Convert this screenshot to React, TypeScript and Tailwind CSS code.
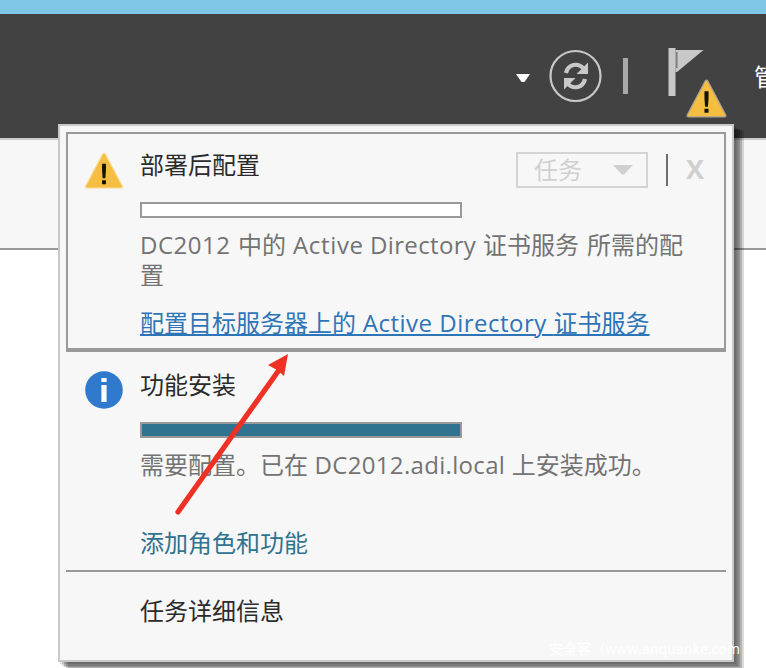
import type { ReactNode } from "react";

function Word({ className, children }: { className: string; children: ReactNode }) {
  return <span className={`inline-block whitespace-nowrap ${className}`}>{children}</span>;
}

function WarningIcon({ className, edge }: { className: string; edge: string }) {
  return (
    <svg className={className} viewBox="0 0 40 38">
      <path d="M18.6 2.2 Q20 0 21.4 2.2 L38.8 35 Q39.4 37 37.4 37 H2.6 Q.6 37 1.2 35 Z" fill="#f6be40" stroke={edge} strokeWidth="1.2" />
      <path d="M18 12 H22 V19 L21.4 27 H18.6 L18 19 Z M18 29 H22 V33 H18 Z" fill="#161200" />
    </svg>
  );
}

function InfoIcon() {
  return (
    <svg className="h-10 w-10" viewBox="0 0 40 40">
      <circle cx="20" cy="20" r="18.8" fill="#2f7acd" />
      <path d="M17.4 8 H22.6 V12 H17.4 Z M17.4 15 H22.6 V32 H17.4 Z" fill="#fff" />
    </svg>
  );
}

function Header() {
  return (
    <header className="h-[126px] shrink-0 overflow-hidden border-b-2 border-[#cccccc] bg-[#424242]">
      <div className="flex h-[110px] w-[800px] items-start pl-[516px]">
        <svg className="mt-[60px] h-2 w-[14px] shrink-0" viewBox="0 0 14 8">
          <path d="M0 0 H14 L8.5 8 H5.5 Z" fill="#fff" />
        </svg>
        <svg className="ml-[19px] mt-[35px] h-[54px] w-[54px] shrink-0" viewBox="0 0 54 54" fill="none" stroke="#c8c8c8">
          <circle cx="26.5" cy="27" r="25" strokeWidth="2.2" />
          <path d="M17 24 C19 15 29 13 35 20" strokeWidth="4.2" />
          <path d="M36 30 C34 39 24 41 18 34" strokeWidth="4.2" />
          <path d="M39 13.5 V25 H27.5 Z M15 40.5 V29 H26.5 Z" fill="#c8c8c8" stroke="none" />
        </svg>
        <div className="ml-5 mt-11 h-9 w-[5px] shrink-0 bg-[#a9a9a9]" />
        <div className="relative ml-10 mt-[34px] h-12 w-9 shrink-0">
          <svg className="h-12 w-9" viewBox="0 0 36 48">
            <path d="M.5 0 H7.5 V48 H.5 Z" fill="#c8c8c8" />
            <path d="M7.5 2 H35.5 L9 24 H7.5 Z" fill="#c8c8c8" />
            <path d="M8.8 4 V20" stroke="#777777" strokeWidth="1.4" />
          </svg>
          <WarningIcon className="absolute left-[18px] top-[31px] h-[39px] w-[41px]" edge="#a8a49a" />
        </div>
        <span className="ml-[50px] mt-[45px] shrink-0 text-[24px] leading-9 text-white">管</span>
      </div>
    </header>
  );
}

function DeploymentTask() {
  return (
    <section className="flex h-[220px] border-2 border-b-4 border-[#999999] pl-[16px]">
      <WarningIcon className="mt-[18px] h-[37px] w-10 shrink-0" edge="#f9dc93" />
      <div className="ml-4 flex-1">
        <div className="flex h-[68px]">
          <h2 className="mt-4 w-[376px] leading-[30px] text-[#2b2b2b]">部署后配置</h2>
          <button className="mt-[18px] flex h-9 w-[132px] items-center border-2 border-[#d4d4d4] pl-4 text-[#d0d0d0]">
            <span className="leading-[30px]">任务</span>
            <svg className="ml-[31px] h-[10px] w-5" viewBox="0 0 20 10">
              <path d="M0 0 H20 L11 9.5 H9 Z" fill="#d0d0d0" />
            </svg>
          </button>
          <div className="ml-[18px] mt-5 h-8 w-[2px] bg-[#6e6e6e]" />
          <span className="ml-[18px] mt-[20px] font-[Open_Sans] text-[27px] leading-[30px] font-bold text-[#cfcfcf]">X</span>
        </div>
        <div className="h-4 w-[322px] border-2 border-[#999999] bg-white" />
        <p className="mt-[12px] leading-[30px] text-[#737373]">
          <span className="flex">
            <Word className="w-[98px] tracking-[0.5px]">DC2012</Word>
            <Word className="w-[55px]">中的</Word>
            <Word className="w-[77px] tracking-[0.65px]">Active</Word>
            <Word className="w-[113px] tracking-[0.35px]">Directory</Word>
            <Word className="w-[104px]">证书服务</Word>
            <Word className="w-[96px]">所需的配</Word>
          </span>
          置
        </p>
        <a className="mt-[18px] block h-[30px] w-[510px] whitespace-nowrap leading-[30px] text-[#2e75b8] underline decoration-2 underline-offset-2" href="#configure">
          配置目标服务器上的<span className="tracking-[0.5px]"> Active Directory </span>证书服务
        </a>
      </div>
    </section>
  );
}

function InstallTask() {
  return (
    <section className="flex h-[220px] border-b-2 border-[#999999] pl-[18px]">
      <div className="mt-[18px] shrink-0"><InfoIcon /></div>
      <div className="ml-4">
        <h2 className="mt-[18px] leading-[30px] text-[#2b2b2b]">功能安装</h2>
        <div className="mt-[22px] h-4 w-[322px] border-2 border-[#999999] bg-[#2f7391]" />
        <p className="mt-[12px] whitespace-nowrap leading-[30px] text-[#737373]">
          需要配置。已在<span className="tracking-[0.32px]"> DC2012.adi.local </span>上安装成功。
        </p>
        <a className="mt-[48px] block leading-[30px] text-[#2f7391]" href="#roles">添加角色和功能</a>
      </div>
    </section>
  );
}

export default function App() {
  return (
    <div className="relative flex h-[668px] w-[766px] flex-col overflow-hidden bg-white font-['Open_Sans','Noto_Sans_CJK_SC',sans-serif] text-[24px]">
      <div className="h-[14px] shrink-0 bg-[#7ec8e6]" />
      <Header />
      <div className="h-[110px] shrink-0 border-b-2 border-[#999999] bg-[#f7f7f7]" />
      <main className="absolute left-[58px] top-[124px] h-[538px] w-[676px] border-2 border-[#c8c8c8] bg-[#f7f7f7] p-[6px] shadow-[2px_2px_0_rgba(0,0,0,.11),4px_4px_0_rgba(0,0,0,.14),6px_5px_0_rgba(0,0,0,.2),8px_6px_0_rgba(0,0,0,.18),10px_6px_0_rgba(0,0,0,.14)]">
        <DeploymentTask />
        <InstallTask />
        <footer className="pl-[74px] pt-6 leading-[30px] text-[#2b2b2b]">任务详细信息</footer>
      </main>
      <svg className="absolute left-[170px] top-[350px] h-[170px] w-[125px]" viewBox="0 0 125 170">
        <path d="M8 162 L109 20" stroke="#ee3025" strokeWidth="5.2" strokeLinecap="round" />
        <path d="M118 4 L114 26 L107 20 L98 15 Z" fill="#ee3025" />
      </svg>
      <span className="absolute left-[549px] top-[639px] whitespace-nowrap text-[14px] leading-5 tracking-[0.1px] text-white">安全客（www.anquanke.com</span>
    </div>
  );
}
